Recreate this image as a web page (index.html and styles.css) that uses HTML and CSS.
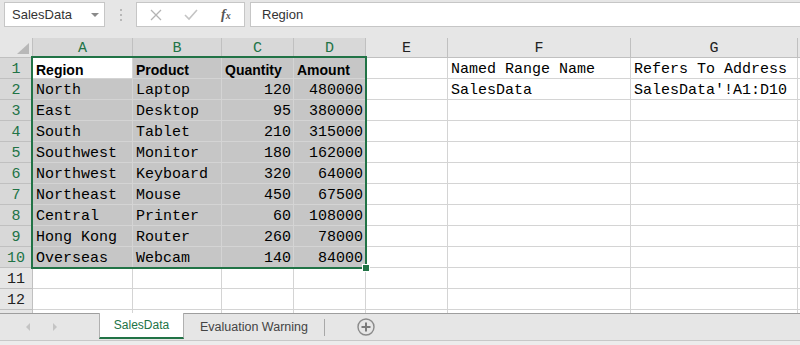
FILE: index.html
```html
<!DOCTYPE html>
<html lang="en">
<head>
    <meta charset="UTF-8">
    <title>SalesData</title>
    <link rel="stylesheet" href="styles.css">
</head>
<body>
    <div class="formula-bar">
        <div class="name-box">
            <span>SalesData</span>
            <span class="caret"></span>
        </div>
        <div class="grip"><i></i><i></i><i></i></div>
        <div class="fx-box">
            <svg width="14" height="14" viewBox="0 0 14 14"><path d="M2 2 L12 12 M12 2 L2 12" stroke="#b4b4b4" stroke-width="1.3" fill="none"/></svg>
            <svg width="16" height="14" viewBox="0 0 16 14"><path d="M2 7 L6 11 L14 2" stroke="#c4c4c4" stroke-width="1.6" fill="none"/></svg>
            <span class="fx">f<small>x</small></span>
        </div>
        <div class="formula-input">Region</div>
    </div>

    <div class="sheet">
        <div class="grid">
            <div class="corner"><span class="tri"></span></div>
            <div class="col-head sel">A</div>
            <div class="col-head sel">B</div>
            <div class="col-head sel">C</div>
            <div class="col-head sel">D</div>
            <div class="col-head">E</div>
            <div class="col-head">F</div>
            <div class="col-head">G</div>
            <div class="col-head"></div>

            <div class="row-head sel">1</div>
            <div class="cell bold active">Region</div>
            <div class="cell bold sel">Product</div>
            <div class="cell bold sel">Quantity</div>
            <div class="cell bold sel">Amount</div>
            <div class="cell"></div>
            <div class="cell">Named Range Name</div>
            <div class="cell">Refers To Address</div>
            <div class="cell"></div>

            <div class="row-head sel">2</div>
            <div class="cell sel">North</div>
            <div class="cell sel">Laptop</div>
            <div class="cell sel num">120</div>
            <div class="cell sel num">480000</div>
            <div class="cell"></div>
            <div class="cell">SalesData</div>
            <div class="cell">SalesData'!A1:D10</div>
            <div class="cell"></div>

            <div class="row-head sel">3</div>
            <div class="cell sel">East</div>
            <div class="cell sel">Desktop</div>
            <div class="cell sel num">95</div>
            <div class="cell sel num">380000</div>
            <div class="cell"></div><div class="cell"></div><div class="cell"></div><div class="cell"></div>

            <div class="row-head sel">4</div>
            <div class="cell sel">South</div>
            <div class="cell sel">Tablet</div>
            <div class="cell sel num">210</div>
            <div class="cell sel num">315000</div>
            <div class="cell"></div><div class="cell"></div><div class="cell"></div><div class="cell"></div>

            <div class="row-head sel">5</div>
            <div class="cell sel">Southwest</div>
            <div class="cell sel">Monitor</div>
            <div class="cell sel num">180</div>
            <div class="cell sel num">162000</div>
            <div class="cell"></div><div class="cell"></div><div class="cell"></div><div class="cell"></div>

            <div class="row-head sel">6</div>
            <div class="cell sel">Northwest</div>
            <div class="cell sel">Keyboard</div>
            <div class="cell sel num">320</div>
            <div class="cell sel num">64000</div>
            <div class="cell"></div><div class="cell"></div><div class="cell"></div><div class="cell"></div>

            <div class="row-head sel">7</div>
            <div class="cell sel">Northeast</div>
            <div class="cell sel">Mouse</div>
            <div class="cell sel num">450</div>
            <div class="cell sel num">67500</div>
            <div class="cell"></div><div class="cell"></div><div class="cell"></div><div class="cell"></div>

            <div class="row-head sel">8</div>
            <div class="cell sel">Central</div>
            <div class="cell sel">Printer</div>
            <div class="cell sel num">60</div>
            <div class="cell sel num">108000</div>
            <div class="cell"></div><div class="cell"></div><div class="cell"></div><div class="cell"></div>

            <div class="row-head sel">9</div>
            <div class="cell sel">Hong Kong</div>
            <div class="cell sel">Router</div>
            <div class="cell sel num">260</div>
            <div class="cell sel num">78000</div>
            <div class="cell"></div><div class="cell"></div><div class="cell"></div><div class="cell"></div>

            <div class="row-head sel">10</div>
            <div class="cell sel">Overseas</div>
            <div class="cell sel">Webcam</div>
            <div class="cell sel num">140</div>
            <div class="cell sel num">84000</div>
            <div class="cell"></div><div class="cell"></div><div class="cell"></div><div class="cell"></div>

            <div class="row-head">11</div>
            <div class="cell"></div><div class="cell"></div><div class="cell"></div><div class="cell"></div>
            <div class="cell"></div><div class="cell"></div><div class="cell"></div><div class="cell"></div>

            <div class="row-head">12</div>
            <div class="cell"></div><div class="cell"></div><div class="cell"></div><div class="cell"></div>
            <div class="cell"></div><div class="cell"></div><div class="cell"></div><div class="cell"></div>

            <div class="row-head"></div>
            <div class="cell"></div><div class="cell"></div><div class="cell"></div><div class="cell"></div>
            <div class="cell"></div><div class="cell"></div><div class="cell"></div><div class="cell"></div>
        </div>
        <div class="selection"><span class="handle"></span></div>
    </div>

    <div class="tabs">
        <div class="nav">
            <span class="arrow left"></span>
            <span class="arrow right"></span>
        </div>
        <div class="tab active">SalesData</div>
        <div class="tab">Evaluation Warning</div>
        <div class="tab-sep"></div>
        <div class="add-sheet">
            <svg width="20" height="20" viewBox="0 0 20 20">
                <circle cx="10" cy="10" r="8" stroke="#8a8a8a" stroke-width="1.4" fill="none"/>
                <path d="M10 5.5 V14.5 M5.5 10 H14.5" stroke="#7a7a7a" stroke-width="2" fill="none"/>
            </svg>
        </div>
    </div>
    <div class="status"></div>
</body>
</html>
```

FILE: styles.css
```css
body {
    margin: 0;
    width: 800px;
    height: 345px;
    overflow: hidden;
    background: #e6e6e6;
    font-family: 'Liberation Sans', Arial, sans-serif;
    color: #222;
}
.formula-bar {
    height: 38px;
    display: flex;
    align-items: flex-start;
    padding-top: 2px;
    box-sizing: border-box;
}
.name-box {
    margin-left: 4px;
    width: 101px;
    height: 25px;
    box-sizing: border-box;
    background: #fff;
    border: 1px solid #c6c6c6;
    display: flex;
    align-items: center;
    justify-content: space-between;
    padding: 0 5px 0 7px;
    font-size: 13px;
    color: #333;
}
.caret {
    width: 0;
    height: 0;
    border-left: 4px solid transparent;
    border-right: 4px solid transparent;
    border-top: 4px solid #8a8a8a;
}
.grip {
    width: 31px;
    height: 25px;
    display: flex;
    flex-direction: column;
    align-items: center;
    justify-content: center;
    gap: 3px;
}
.grip i {
    width: 2px;
    height: 2px;
    background: #b8b8b8;
}
.fx-box {
    width: 109px;
    height: 25px;
    box-sizing: border-box;
    background: #fff;
    border: 1px solid #c6c6c6;
    display: flex;
    align-items: center;
    padding-left: 12px;
    gap: 20px;
}
.fx {
    font-family: 'Liberation Serif', serif;
    font-style: italic;
    font-weight: bold;
    font-size: 14px;
    color: #555;
    margin-left: 2px;
}
.fx small {
    font-size: 10px;
}
.formula-input {
    margin-left: 5px;
    flex: 1;
    height: 25px;
    box-sizing: border-box;
    background: #fff;
    border: 1px solid #c6c6c6;
    border-right: none;
    display: flex;
    align-items: center;
    padding-left: 11px;
    font-size: 13px;
    color: #333;
}
.sheet {
    position: relative;
    height: 275px;
    overflow: hidden;
    background: #fff;
}
.grid {
    display: grid;
    grid-template-columns: 33px 100px 89px 72px 72px 82px 183px 167px 1fr;
    grid-template-rows: 20px;
    grid-auto-rows: 21px;
    font-family: 'Liberation Mono', monospace;
    font-size: 15px;
}
.grid > div {
    box-sizing: border-box;
    border-right: 1px solid #d4d4d4;
    border-bottom: 1px solid #d4d4d4;
    overflow: hidden;
    white-space: nowrap;
}
.corner {
    background: #e6e6e6;
    position: relative;
}
.grid > .corner,
.grid > .col-head,
.grid > .row-head {
    border-color: #c0c0c0;
}
.tri {
    position: absolute;
    right: 3px;
    bottom: 3px;
    width: 0;
    height: 0;
    border-left: 12px solid transparent;
    border-bottom: 11px solid #b8b8b8;
}
.col-head {
    background: #e6e6e6;
    text-align: center;
    line-height: 21px;
    color: #222;
}
.row-head {
    background: #e6e6e6;
    text-align: center;
    line-height: 23px;
    color: #222;
}
.col-head.sel,
.row-head.sel {
    background: #d8d8d8;
    color: #217346;
}
.cell {
    padding: 0 2px 0 3px;
    line-height: 23px;
    color: #000;
}
.cell.sel {
    background: #c6c6c6;
}
.cell.active {
    background: #fff;
}
.cell.num {
    text-align: right;
}
.cell.bold {
    font-family: 'Liberation Sans', Arial, sans-serif;
    font-weight: bold;
    font-size: 14px;
    line-height: 24px;
}
.selection {
    position: absolute;
    left: 31px;
    top: 18px;
    width: 336px;
    height: 213px;
    box-sizing: border-box;
    border: 2px solid #217346;
    pointer-events: none;
}
.handle {
    position: absolute;
    right: -5px;
    bottom: -5px;
    width: 6px;
    height: 6px;
    background: #217346;
    border: 1px solid #fff;
}
.tabs {
    height: 28px;
    box-sizing: border-box;
    border-top: 1px solid #9e9e9e;
    border-bottom: 1px solid #c8c8c8;
    display: flex;
    align-items: stretch;
    font-size: 12.5px;
}
.nav {
    width: 99px;
    display: flex;
    align-items: center;
    padding-left: 26px;
    box-sizing: border-box;
    gap: 23px;
}
.arrow {
    width: 0;
    height: 0;
    border-top: 4px solid transparent;
    border-bottom: 4px solid transparent;
}
.arrow.left {
    border-right: 4px solid #c4c4c4;
}
.arrow.right {
    border-left: 4px solid #c4c4c4;
}
.tab {
    display: flex;
    align-items: center;
    padding: 0 16px;
    color: #444;
    margin-top: -1px;
    box-sizing: border-box;
}
.tab.active {
    width: 85px;
    justify-content: center;
    background: #fff;
    color: #217346;
    border-left: 1px solid #b0b0b0;
    border-right: 1px solid #b0b0b0;
    border-bottom: 2px solid #217346;
    height: 26px;
    padding: 0;
    font-size: 12px;
}
.tab-sep {
    width: 1px;
    background: #a8a8a8;
    margin: 5px 0 4px;
}
.add-sheet {
    margin-left: 31px;
    display: flex;
    align-items: center;
}
.status {
    height: 4px;
    background: #ececec;
}
```
